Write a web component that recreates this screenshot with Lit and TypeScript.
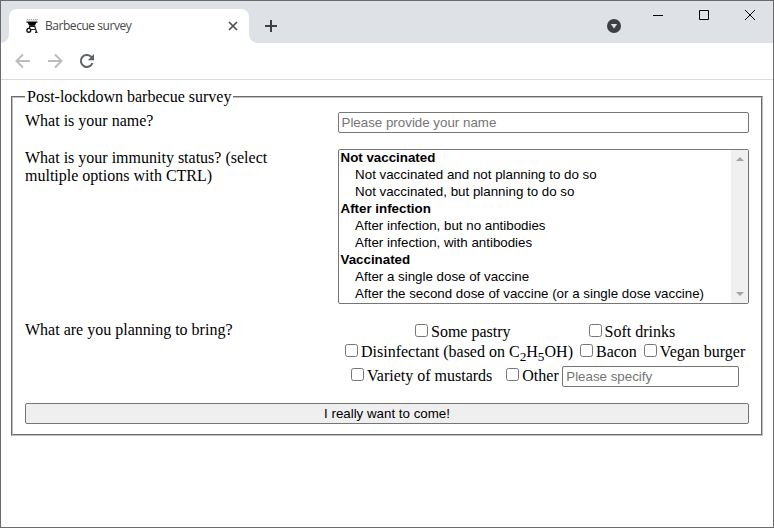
import { LitElement, html, css } from "lit";
import { customElement } from "lit/decorators.js";

const groups = [
  { label: "Not vaccinated", options: [
    "Not vaccinated and not planning to do so",
    "Not vaccinated, but planning to do so",
  ] },
  { label: "After infection", options: [
    "After infection, but no antibodies",
    "After infection, with antibodies",
  ] },
  { label: "Vaccinated", options: [
    "After a single dose of vaccine",
    "After the second dose of vaccine (or a single dose vaccine)",
  ] },
];

@customElement("app-root")
export class AppRoot extends LitElement {
  static styles = css`
    :host { display: block; }
    * { box-sizing: border-box; }
    svg { display: block; }
    .window {
      width: 774px; height: 528px; border: 1px solid #6a6a6c; background: #fff;
      font: 16px/18px "Liberation Serif", serif; color: #000; overflow: hidden;
      display: flex; flex-direction: column;
    }
    .strip { height: 42px; background: #dee1e6; display: flex; align-items: flex-start; flex: none; }
    .tab {
      position: relative; width: 240px; height: 34px; margin: 8px 0 0 8px; background: #fff;
      border-radius: 8px 8px 0 0; display: flex; align-items: center; padding-left: 15px;
    }
    .tab::before, .tab::after {
      content: ""; position: absolute; bottom: 0; width: 8px; height: 8px;
    }
    .tab::before { left: -8px; background: radial-gradient(circle at 0 0, #dee1e6 7.5px, #fff 8px); }
    .tab::after { right: -8px; background: radial-gradient(circle at 100% 0, #dee1e6 7.5px, #fff 8px); }
    .title {
      font: 12px/16px "Open Sans", "Noto Sans", sans-serif; letter-spacing: -0.45px;
      color: #45474a; margin-left: 5px; width: 182px;
    }
    .plus { margin: 19px 0 0 16px; }
    .update { margin: 18px 0 0 330px; }
    .controls { display: flex; margin: 8px 0 0 31px; gap: 34px; }
    .toolbar {
      height: 37px; flex: none; border-bottom: 1px solid #dadce0;
      display: flex; padding: 10px 0 0 14px; gap: 16px;
    }
    .page { padding: 8px 10px 0; }
    fieldset {
      margin: 0; border: 2px groove #c0c0c0; height: 348px; min-width: 0;
      padding: 6px 12px 10px; display: block;
    }
    legend { padding: 0 2px; height: 18px; }
    .row { display: grid; grid-template-columns: 313px 411px; }
    .name { height: 37px; }
    .status { height: 172px; }
    .bring { height: 82px; }
    .question { width: 262px; }
    input { display: block; margin: 0; }
    input[type="text"] {
      appearance: none; border: 1px solid #767676; border-radius: 2px; height: 21px;
      background: #fff; outline: none; font: 13.333px "Liberation Sans", sans-serif;
      padding: 0 3px 0 2.5px;
    }
    input::placeholder { color: #757575; opacity: 1; }
    .wide { width: 411px; }
    .list {
      width: 411px; height: 155px; border: 1px solid #767676; border-radius: 2px;
      display: flex; justify-content: space-between; font: 13.333px/17px "Liberation Sans", sans-serif;
    }
    .rows { padding-left: 1.5px; margin-top: -1px; }
    .group { font-weight: 700; height: 17px; }
    .option { padding-left: 14.6px; height: 17px; }
    .bar {
      width: 17px; background: #f0f0f0; display: flex; flex-direction: column;
      justify-content: space-between; align-items: center; padding: 7px 0;
    }
    .choices { display: flex; flex-direction: column; }
    .choice-row { display: flex; }
    .choice { display: flex; align-items: flex-start; white-space: nowrap; }
    input[type="checkbox"] {
      appearance: none; width: 13px; height: 13px; border: 1px solid #767676;
      border-radius: 2.5px; background: #fff; margin-right: 3px;
    }
    .choice span { margin-top: -1px; }
    sub { font-size: 13.333px; line-height: 0; vertical-align: sub; }
    .r1 { height: 20px; padding-left: 77px; gap: 78px; margin-top: 3px; }
    .r2 { height: 22px; padding-left: 7px; gap: 7px; }
    .r3 { padding-left: 13px; height: 21px; }
    .box-line { margin-top: 2px; }
    .other { margin-left: 14px; }
    input.specify { width: 177px; margin-left: 3px; padding-left: 3.5px; }
    .submit {
      width: 724px; height: 21px; border: 1px solid #767676; border-radius: 2px; background: #efefef;
      font: 13.333px "Liberation Sans", sans-serif; color: #000; padding: 0; display: block;
    }
  `;

  private choice(label: unknown, cls = "") {
    return html`<label class="choice ${cls}"><input type="checkbox" /><span>${label}</span></label>`;
  }

  render() {
    return html`
      <div class="window">
        <div class="strip">
          <div class="tab">
            <svg width="16" height="16" viewBox="0 0 16 16">
              <path d="M3 2.500l1-1.500M5 2.500l1-1.500M7 2.500l1-1.500M9 2.500l1-1.500M11 2.500l1-1.500M12.500 2.500l1-1.500" fill="none" stroke="#777" stroke-width="0.8" />
              <path d="M2.500 3.500h11v1.200h-1.300Q11.500 8 8 8T3.800 4.700H2.500z" fill="#080808" />
              <path d="M5 7.500h6v1.500H5z" fill="#222" />
              <path d="M10.500 7.500l2 6.500M6 8.500l-1 2.500M6.500 11.500l4.500 0M11 14.300h2.500" fill="none" stroke="#222" stroke-width="1.2" />
              <circle cx="4.800" cy="12.300" r="1.900" fill="#fff" stroke="#111" stroke-width="1.400" />
            </svg>
            <span class="title">Barbecue survey</span>
            <svg width="12" height="12" viewBox="0 0 12 12">
              <path d="M2 2l8 8M10 2l-8 8" stroke="#4d5054" stroke-width="1.7" />
            </svg>
          </div>
          <svg class="plus" width="12" height="12" viewBox="0 0 12 12">
            <path d="M6 0v12M0 6h12" stroke="#3c4043" stroke-width="2" />
          </svg>
          <svg class="update" width="14" height="14" viewBox="0 0 14 14">
            <circle cx="7" cy="7" r="7" fill="#3c4043" />
            <path d="M3.8 5h6.4L7 9.6z" fill="#dee1e6" />
          </svg>
          <div class="controls">
            <svg width="12" height="12" viewBox="0 0 12 12"><path d="M1 6.5h10" stroke="#000" /></svg>
            <svg width="12" height="12" viewBox="0 0 12 12"><path d="M1.5 1.5h9v9h-9z" fill="none" stroke="#000" /></svg>
            <svg width="12" height="12" viewBox="0 0 12 12"><path d="M1 1l10 10M11 1L1 11" stroke="#000" /></svg>
          </div>
        </div>
        <div class="toolbar">
          <svg width="16" height="16" viewBox="0 0 16 16"><path d="M15 8H2.5M8 1.5L1.5 8 8 14.5" fill="none" stroke="#babcbe" stroke-width="2" /></svg>
          <svg width="16" height="16" viewBox="0 0 16 16"><path d="M1 8h12.500M8 1.500L14.500 8 8 14.500" fill="none" stroke="#babcbe" stroke-width="2" /></svg>
          <svg width="16" height="16" viewBox="0 0 16 16">
            <path d="M13.500 10a6 6 0 1 1-1.500-6.400L13 4.800" fill="none" stroke="#5f6368" stroke-width="2" />
            <path d="M15 1v6.200H8.800z" fill="#5f6368" />
          </svg>
        </div>
        <div class="page">
          <fieldset>
            <legend>Post-lockdown barbecue survey</legend>
            <div class="row name">
              <div class="question">What is your name?</div>
              <input class="wide" type="text" placeholder="Please provide your name" />
            </div>
            <div class="row status">
              <div class="question">What is your immunity status? (select multiple options with CTRL)</div>
              <div class="list">
                <div class="rows">
                  ${groups.map((g) => html`
                    <div class="group">${g.label}</div>
                    ${g.options.map((o) => html`<div class="option">${o}</div>`)}
                  `)}
                </div>
                <div class="bar">
                  <svg width="8" height="4" viewBox="0 0 8 4"><path d="M4 0l4 4H0z" fill="#a3a3a3" /></svg>
                  <svg width="8" height="4" viewBox="0 0 8 4"><path d="M0 0h8L4 4z" fill="#a3a3a3" /></svg>
                </div>
              </div>
            </div>
            <div class="row bring">
              <div class="question">What are you planning to bring?</div>
              <div class="choices">
                <div class="choice-row r1">${this.choice("Some pastry")}${this.choice("Soft drinks")}</div>
                <div class="choice-row r2">
                  ${this.choice(html`Disinfectant (based on C<sub>2</sub>H<sub>5</sub>OH)`)}
                  ${this.choice("Bacon")}${this.choice("Vegan burger")}
                </div>
                <div class="choice-row r3">
                  ${this.choice("Variety of mustards", "box-line")}
                  ${this.choice("Other", "box-line other")}
                  <input class="specify" type="text" placeholder="Please specify" />
                </div>
              </div>
            </div>
            <button class="submit">I really want to come!</button>
          </fieldset>
        </div>
      </div>
    `;
  }
}
